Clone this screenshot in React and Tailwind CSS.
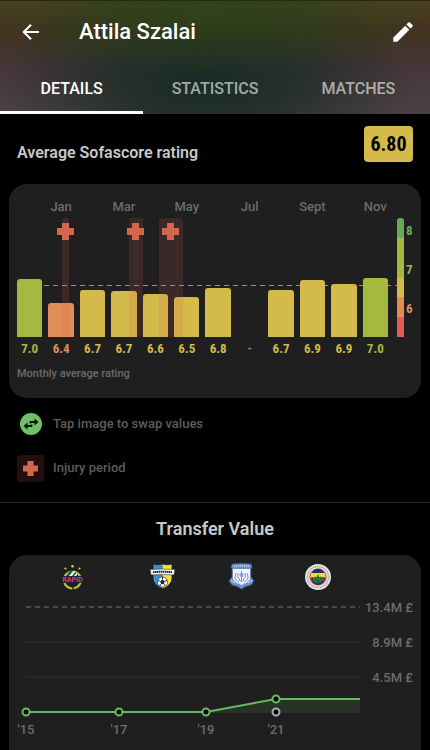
import { useState } from "react";

const tabs = ["DETAILS", "STATISTICS", "MATCHES"];

const months = [
  { label: "", rating: "7.0", height: 58, bar: "bg-[#a5b83f]", text: "text-[#a5b83f]" },
  { label: "Jan", rating: "6.4", height: 34, bar: "bg-[#e08d56]", text: "text-[#e08d56]" },
  { label: "", rating: "6.7", height: 47, bar: "bg-[#d4b94b]", text: "text-[#d4b94b]" },
  { label: "Mar", rating: "6.7", height: 46, bar: "bg-[#d4b94b]", text: "text-[#d4b94b]" },
  { label: "", rating: "6.6", height: 43, bar: "bg-[#d4b94b]", text: "text-[#d4b94b]" },
  { label: "May", rating: "6.5", height: 40, bar: "bg-[#d4b94b]", text: "text-[#d4b94b]" },
  { label: "", rating: "6.8", height: 49, bar: "bg-[#d4b94b]", text: "text-[#d4b94b]" },
  { label: "Jul", rating: "-", height: 0, bar: "", text: "text-[#8a8a8a]" },
  { label: "", rating: "6.7", height: 47, bar: "bg-[#d4b94b]", text: "text-[#d4b94b]" },
  { label: "Sept", rating: "6.9", height: 57, bar: "bg-[#d4b94b]", text: "text-[#d4b94b]" },
  { label: "", rating: "6.9", height: 53, bar: "bg-[#d4b94b]", text: "text-[#d4b94b]" },
  { label: "Nov", rating: "7.0", height: 59, bar: "bg-[#a5b83f]", text: "text-[#a5b83f]" },
];

// start and length of each injury, in percent of the year shown
const injuries = [
  { start: 12.2, length: 1.9 },
  { start: 30.1, length: 3.8 },
  { start: 38.2, length: 6.6 },
];

const values = [
  { label: "13.4M £", y: 52 },
  { label: "8.9M £", y: 87 },
  { label: "4.5M £", y: 122 },
];

const years = [
  { label: "'15", x: 9, y: 157 },
  { label: "'17", x: 102, y: 157 },
  { label: "'19", x: 189, y: 157 },
  { label: "'21", x: 259, y: 144 },
];

const Cross = ({ className }) => (
  <svg className={className} viewBox="0 0 17 17" fill="#d4654e" aria-hidden="true">
    <path d="M5 0h7v5h5v7h-5v5H5v-5H0V5h5z" />
  </svg>
);

const RapidLogo = () => (
  <g transform="translate(45 10)">
    <g fill="#d9d92f">
      <circle cx="10.500" cy="1.300" r="1.300" />
      <circle cx="3.500" cy="3.500" r="1.100" />
      <circle cx="17.500" cy="3.500" r="1.100" />
    </g>
    <circle cx="10.500" cy="15" r="8.500" fill="none" stroke="#c3c431" strokeWidth="2.200" strokeDasharray="12 1.350" />
    <circle cx="10.500" cy="10.500" r="5" fill="#12613d" />
    <path d="M7 11l4-5h3l-4 5zM12 11l3-4v3l-1 1z" fill="#f1f5ef" />
    <path d="M1 11h19l1 3-1 4H1l-1-4z" fill="#1b2548" />
    <text x="10.500" y="17" fontSize="7" fontWeight="700" textAnchor="middle" fill="#e03d38">
      RAPID
    </text>
  </g>
);

const MezokovesdLogo = () => (
  <g transform="translate(133 8)">
    <path d="M3 1q5 1.500 9.500 0v25Q3 22 3 15z" fill="#3c8fd4" />
    <path d="M12.500 1q5 1.500 9.500 0v14q0 7-9.500 11z" fill="#f2e23c" />
    <path d="M3 1q5 1.500 9.500 0 5 1.500 9.500 0v14q0 7-9.500 11Q3 22 3 15z" fill="none" stroke="#161b22" strokeWidth=".8" />
    <path d="M0 6.500q12.500-1 25 0l-1 5.500q-11.500-1-23 0z" fill="#f4f4f4" stroke="#222" strokeWidth=".5" />
    <path d="M3 9.200q9.500-.8 19 0" fill="none" stroke="#27272a" strokeWidth="2" strokeDasharray="1.500 .5" />
    <circle cx="12.500" cy="19" r="5" fill="#fff" stroke="#222" strokeWidth=".6" />
    <path d="M12.500 16.600l2.300 1.700-.9 2.700h-2.800l-.9-2.700z" fill="#222" />
    <path
      d="M12.500 16.600V14M14.800 18.300l2.400-.9M13.900 21l1.400 2M11.100 21l-1.400 2M10.200 18.300l-2.400-.9"
      stroke="#222"
      strokeWidth=".9"
    />
  </g>
);

const ApollonLogo = () => (
  <g transform="translate(212 8)">
    <path
      d="M3 1q9.500-1 19 0l1 3-1 2v8l3 4-3 4q-6 1-9.500 4Q9 23 3 22l-3-4 3-4V6L2 4z"
      fill="#6d8fcb"
      stroke="#405f9e"
      strokeWidth=".6"
    />
    <path d="M4 6h17v10q-3 5-8.500 6Q7 21 4 16z" fill="#f1f5fb" />
    <path d="M5 3.200q7.500-.8 15 0" fill="none" stroke="#d9e4f7" strokeWidth="1.200" strokeDasharray="1.200 .8" />
    <path d="M7 10q-3 7 3 9M18 10q3 7-3 9M9 10q-2 4 2 7M16 10q2 4-2 7" fill="none" stroke="#7794cb" />
    <circle cx="12.500" cy="12" r="2.200" fill="#91a9d6" />
    <path d="M12.500 8v10M10 17q2.500 3 5 0M9 20l3.500 3 3.500-3" fill="none" stroke="#7d98cf" />
    <path d="M2 17l4 3M23 17l-4 3" stroke="#e4ebf6" />
  </g>
);

const FenerbahceLogo = () => (
  <g transform="translate(288 9)">
    <circle cx="13" cy="13" r="13" fill="#e4e4e6" />
    <circle cx="13" cy="13" r="10.500" fill="none" stroke="#9b9da5" strokeWidth="1.600" strokeDasharray="1.200 1" />
    <circle cx="13" cy="13" r="8.500" fill="#d52d38" />
    <path d="M6.500 10.500Q8 5 13 4.800q5 .2 6.500 5.700z" fill="#17375f" />
    <path d="M6 9h14l.8 4.500H5.200z" fill="#f4dd28" />
    <path d="M6.300 13.500h13.400Q19 20 13 21q-6-1-6.700-7.500z" fill="#173b68" />
    <path
      d="M13 10q1.500 2 .7 3.500l2.300-1.200-.4 2.300 3-.8-1 2.700q-2 2.500-4.600 2.500t-4.600-2.500l-1-2.700 3 .8-.4-2.300 2.300 1.200Q11.500 12 13 10z"
      fill="#238347"
    />
    <path d="M13 12v7M10 15l3 3 3-3" fill="none" stroke="#174d38" strokeWidth=".7" />
  </g>
);

const Header = () => {
  const [active, setActive] = useState("DETAILS");

  return (
    <header className="border-t border-[#2b2715] bg-[radial-gradient(ellipse_55%_65%_at_48%_0%,#2f4418_0%,#2f4318a6_45%,transparent_100%),radial-gradient(ellipse_48%_90%_at_48%_70%,#182b24_0%,#1b2c26cc_40%,transparent_100%),linear-gradient(to_bottom,#4e4020_0%,#42321f_25%,#47363a_60%,#4a4143_100%)]">
      <div className="flex h-[61px] items-center pl-[19px] pr-[14px]">
        <button type="button" aria-label="Back" className="text-white">
          <svg className="size-6" viewBox="0 0 24 24" fill="currentColor">
            <path d="M20 11H7.100l5.600-5.600L11.300 4 3.300 12l8 8 1.400-1.400L7.100 13H20z" />
          </svg>
        </button>
        <h1 className="ml-9 flex-1 text-[22px] leading-7 font-medium text-white">
          Attila Szalai
        </h1>
        <button type="button" aria-label="Edit" className="text-white">
          <svg className="size-[26px]" viewBox="0 0 24 24" fill="currentColor">
            <path d="M3 17.250V21h3.750L17.810 9.940l-3.750-3.750L3 17.250zM20.710 7.040a1 1 0 0 0 0-1.410l-2.340-2.340a1 1 0 0 0-1.410 0l-1.830 1.830 3.750 3.750 1.830-1.830z" />
          </svg>
        </button>
      </div>
      <nav className="grid grid-cols-3" role="tablist">
        {tabs.map((tab) => (
          <button
            key={tab}
            type="button"
            role="tab"
            aria-selected={tab === active}
            onClick={() => setActive(tab)}
            className={`h-[52px] border-b-3 pt-1 text-base font-medium ${
              tab === active
                ? "border-white text-white"
                : "border-transparent text-white/60"
            }`}
          >
            {tab}
          </button>
        ))}
      </nav>
    </header>
  );
};

const RatingCard = () => (
  <div className="mx-[9px] mt-[22px] rounded-[18px] bg-[#1f1f1f] px-2 pt-[13px] pb-4">
    <div className="flex">
      <div className="min-w-0 flex-1">
        <div className="grid grid-cols-12 gap-x-[6px] text-[13px] leading-5 font-medium text-[#6c6c6c]">
          {months.map((month, i) => (
            <span key={i} className="flex justify-center whitespace-nowrap">
              {month.label}
            </span>
          ))}
        </div>

        <div className="relative mt-px h-[119px]">
          <div className="grid h-full grid-cols-12 items-end gap-x-[6px]">
            {months.map((month, i) => (
              <div
                key={i}
                className={`rounded-t-[3px] ${month.bar}`}
                style={{ height: month.height }}
              />
            ))}
          </div>
          {injuries.map((injury) => (
            <div
              key={injury.start}
              className="absolute inset-y-0 flex justify-center rounded-t-[3px] bg-[#d4654e]/15 pt-[5px]"
              style={{ left: `${injury.start}%`, width: `${injury.length}%` }}
            >
              <Cross className="size-[17px] shrink-0" />
            </div>
          ))}
          <svg className="absolute top-[67px] left-0 h-px w-full overflow-visible" aria-hidden="true">
            <line x1="0" y1="0.500" x2="102.400%" y2="0.500" stroke="#c9ae45" strokeOpacity=".8" strokeDasharray="5 4" />
          </svg>
        </div>

        <div className="mt-[2px] grid grid-cols-12 gap-x-[6px] font-['Roboto_Condensed','Liberation_Sans_Narrow',Roboto,sans-serif] text-[13px] leading-5 font-bold">
          {months.map((month, i) => (
            <span key={i} className={`flex justify-center ${month.text}`}>
              {month.rating}
            </span>
          ))}
        </div>
      </div>

      <div className="mt-[21px] ml-[9px] flex h-[119px] w-[7px] flex-col overflow-hidden rounded-t-[3px]">
        <div className="flex-1 bg-[#67ab52]" />
        <div className="flex-2 bg-[#a5b83f]" />
        <div className="flex-1 bg-[#d4b94b]" />
        <div className="flex-1 bg-[#e08d56]" />
        <div className="flex-1 bg-[#e45c58]" />
      </div>
      <div className="mt-[24px] ml-[2px] flex w-[7px] flex-col gap-[19px] font-['Roboto_Condensed','Liberation_Sans_Narrow',Roboto,sans-serif] text-[13px] leading-5 font-bold">
        <span className="text-[#67ab52]">8</span>
        <span className="text-[#a5b83f]">7</span>
        <span className="text-[#e08d56]">6</span>
      </div>
    </div>
    <p className="mt-[7px] text-[11px] leading-4 font-medium text-[#6c6c6c]">
      Monthly average rating
    </p>
  </div>
);

const Legend = () => (
  <ul className="mt-[13px] flex flex-col gap-[18px] px-[17px] text-[13px] font-medium text-[#5c5c5c]">
    <li className="flex h-[26px] items-center gap-[9px]">
      <span className="flex w-[27px] justify-center">
        <svg className="size-[22px]" viewBox="0 0 22 22" aria-hidden="true">
          <circle cx="11" cy="11" r="11" fill="#6fbe69" />
          <path
            d="M10.500 10.500V9H15M11.500 11.500V13H7"
            fill="none"
            stroke="#0b120b"
            strokeWidth="1.800"
          />
          <path d="M14.500 5.500L18.500 9l-4 3.500zM7.500 9.500L3.500 13l4 3.500z" fill="#0b120b" />
        </svg>
      </span>
      Tap image to swap values
    </li>
    <li className="flex h-[26px] items-center gap-[9px]">
      <span className="flex size-[27px] items-center justify-center rounded-[2px] bg-[#200f0c]">
        <Cross className="size-[15px]" />
      </span>
      Injury period
    </li>
  </ul>
);

const TransferCard = () => (
  <div className="mx-[9px] mt-[14px] flex-1 rounded-t-[18px] bg-[#1f1f1f] px-2">
    <svg
      className="block w-full"
      viewBox="0 0 396 190"
      fontSize="13"
      fontWeight="500"
      role="img"
      aria-label="Transfer value by year"
    >
      <RapidLogo />
      <MezokovesdLogo />
      <ApollonLogo />
      <FenerbahceLogo />

      <line x1="9" y1="52" x2="343" y2="52" stroke="#8b744c" strokeDasharray="5 4" />
      <line x1="9" y1="87" x2="343" y2="87" stroke="#323232" />
      <line x1="9" y1="122" x2="343" y2="122" stroke="#323232" />
      {values.map((value) => (
        <text key={value.label} x="396" y={value.y + 5} textAnchor="end" fill="#6c6c6c">
          {value.label}
        </text>
      ))}

      <path d="M9 157H189L259 144H343V158H9z" fill="#66b35f" fillOpacity=".13" />
      <path d="M9 157H189L259 144H343" fill="none" stroke="#6ab963" strokeWidth="2" />
      <circle cx="259" cy="157" r="3.500" fill="#000" stroke="#a9a9ba" strokeWidth="2" />
      {years.map((year) => (
        <g key={year.label}>
          <circle cx={year.x} cy={year.y} r="3.500" fill="#000" stroke="#6ab963" strokeWidth="2" />
          <text x={year.x} y="179" textAnchor="middle" fill="#6c6c6c">
            {year.label}
          </text>
        </g>
      ))}
    </svg>
  </div>
);

const App = () => {
  return (
    <div className="flex min-h-screen flex-col bg-black font-[Roboto,sans-serif]">
      <Header />
      <main className="flex flex-1 flex-col">
        <section>
          <div className="flex items-end justify-between px-[17px] pt-3">
            <h2 className="text-base leading-[18px] font-semibold text-[#c8c8c8]">
              Average Sofascore rating
            </h2>
            <span className="flex h-9 w-[49px] items-center justify-center rounded-[4px] bg-[#d4b94b] font-['Roboto_Condensed','Liberation_Sans_Narrow',Roboto,sans-serif] text-xl font-bold text-black">
              6.80
            </span>
          </div>
          <RatingCard />
          <Legend />
        </section>

        <section className="mt-[21px] flex flex-1 flex-col border-t border-[#262626]">
          <h2 className="mt-[14px] text-center text-lg leading-6 font-semibold text-[#c8c8c8]">
            Transfer Value
          </h2>
          <TransferCard />
        </section>
      </main>
    </div>
  );
};

export default App;
